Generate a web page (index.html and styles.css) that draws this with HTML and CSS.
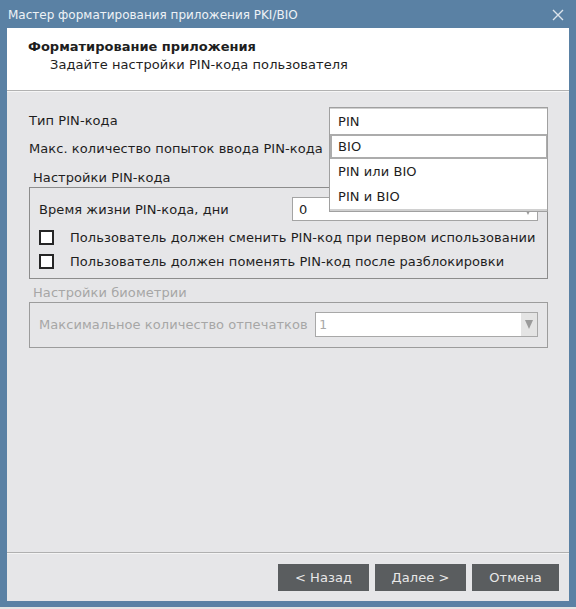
FILE: index.html
```html
<!DOCTYPE html>
<html lang="ru">
<head>
    <meta charset="UTF-8">
    <meta name="viewport" content="width=device-width, initial-scale=1.0">
    <title>Мастер форматирования приложения PKI/BIO</title>
    <link rel="stylesheet" href="styles.css">
</head>
<body>
    <div class="window">
        <div class="titlebar">
            <span class="title">Мастер форматирования приложения PKI/BIO</span>
            <svg class="close" width="12" height="12" viewBox="0 0 12 12">
                <path d="M1 1 L11 11 M11 1 L1 11" stroke="#dce4ec" stroke-width="1.4" fill="none"/>
            </svg>
        </div>

        <div class="client">
            <div class="banner">
                <div class="banner-title">Форматирование приложения</div>
                <div class="banner-sub">Задайте настройки PIN-кода пользователя</div>
            </div>

            <div class="page">
                <div class="row">
                    <span class="label">Тип PIN-кода</span>
                    <div class="combo combo-top"></div>
                </div>
                <div class="row">
                    <span class="label">Макс. количество попыток ввода PIN-кода</span>
                    <div class="combo combo-top"></div>
                </div>

                <div class="group-title">Настройки PIN-кода</div>
                <div class="group group-pin">
                    <div class="row-in">
                        <span class="label">Время жизни PIN-кода, дни</span>
                        <div class="combo combo-life">
                            <span>0</span>
                            <span class="arrow"></span>
                        </div>
                    </div>
                    <div class="check-row">
                        <span class="checkbox"></span>
                        <span class="label">Пользователь должен сменить PIN-код при первом использовании</span>
                    </div>
                    <div class="check-row">
                        <span class="checkbox"></span>
                        <span class="label">Пользователь должен поменять PIN-код после разблокировки</span>
                    </div>
                </div>

                <div class="group-title disabled">Настройки биометрии</div>
                <div class="group group-bio">
                    <div class="row-in">
                        <span class="label disabled">Максимальное количество отпечатков</span>
                        <div class="combo combo-bio">
                            <span class="mono">1</span>
                            <span class="arrow-box"><span class="arrow"></span></span>
                        </div>
                    </div>
                </div>

                <!-- open list of the "Тип PIN-кода" combo -->
                <div class="popup">
                    <div class="item">PIN</div>
                    <div class="item current">BIO</div>
                    <div class="item">PIN или BIO</div>
                    <div class="item">PIN и BIO</div>
                </div>
            </div>

            <div class="footer">
                <button class="btn btn-back">&lt; Назад</button>
                <button class="btn btn-next">Далее &gt;</button>
                <button class="btn btn-cancel">Отмена</button>
            </div>
        </div>
    </div>
</body>
</html>
```

FILE: styles.css
```css
body {
    margin: 0;
    background-color: #e4e4e4;
    font-family: "DejaVu Sans", Verdana, sans-serif;
    font-size: 13px;
    letter-spacing: 0.07px;
    color: #1e1e1e;
}

.window {
    width: 576px;
    height: 607px;
    box-sizing: border-box;
    padding: 0 7px 6px 7px;
    background-color: #5a81a4;
    display: flex;
    flex-direction: column;
}

.titlebar {
    height: 28px;
    display: flex;
    align-items: center;
    justify-content: space-between;
    padding: 0 0 0 1px;
    color: #eef2f6;
    font-size: 12px;
    letter-spacing: 0;
}

.title {
    padding-top: 1px;
}

.close {
    margin-right: 5px;
    margin-top: 2px;
}

.client {
    flex: 1;
    display: flex;
    flex-direction: column;
    background-color: #e6e6e8;
}

.banner {
    height: 63px;
    box-sizing: border-box;
    background: white;
    border-bottom: 1px solid #b2b2b2;
    box-shadow: 0 1px 0 #f6f6f6;
    padding: 10px 0 0 21px;
}

.banner-title {
    font-weight: bold;
    line-height: 17px;
    letter-spacing: 0;
}

.banner-sub {
    padding-left: 22px;
    line-height: 17px;
    margin-top: 1px;
}

.page {
    position: relative;
    flex: 1;
    padding: 15px 21px 0 22px;
}

.row {
    height: 28px;
    display: flex;
    align-items: center;
    justify-content: space-between;
}

.combo {
    box-sizing: border-box;
    height: 24px;
    border: 1px solid #a4a4a4;
    background: white;
    display: flex;
    align-items: center;
    justify-content: space-between;
    padding-left: 6px;
}

.combo-top {
    width: 219px;
}

.group-title {
    margin-top: 8px;
    padding-left: 4px;
    line-height: 16px;
}

.group {
    margin-top: 1px;
    border: 1px solid #8c8c8c;
    padding: 9px 9px 5px 9px;
}

.group-bio {
    margin-top: 1px;
    padding: 9px 9px 10px 9px;
    border-color: #9c9c9c;
}

.group-pin + .group-title {
    margin-top: 6px;
}

.row-in {
    display: flex;
    align-items: center;
    justify-content: space-between;
}

.combo-life {
    width: 246px;
}

.combo-bio {
    width: 223px;
    height: 25px;
    padding-left: 3px;
    border-color: #a8a8a8;
    color: #a8a8a8;
}

.mono {
    font-family: "DejaVu Sans Mono", monospace;
}

.arrow {
    width: 0;
    height: 0;
    border-left: 4px solid transparent;
    border-right: 4px solid transparent;
    border-top: 8px solid #9a9a9a;
    margin-right: 5px;
    margin-top: 4px;
}

.arrow-box {
    width: 16px;
    height: 23px;
    background-color: #e4e4e4;
    display: flex;
    align-items: center;
    justify-content: center;
}

.arrow-box .arrow {
    margin: 0;
    border-top-width: 9px;
}

.check-row {
    height: 24px;
    display: flex;
    align-items: center;
    gap: 16px;
}

.row-in + .check-row {
    margin-top: 4px;
}

.checkbox {
    width: 15px;
    height: 15px;
    box-sizing: border-box;
    border: 2px solid #262626;
    background: white;
}

.disabled {
    color: #a6a6a6;
}

.popup {
    position: absolute;
    left: 322px;
    top: 16px;
    width: 219px;
    box-sizing: border-box;
    background: white;
    border: 1px solid #a0a0a0;
    box-shadow: inset 0 1px 0 #d0d0d0, inset 0 -2px 0 #d0d0d0;
    padding: 1px 0 2px 0;
}

.item {
    height: 25px;
    box-sizing: border-box;
    display: flex;
    align-items: center;
    padding-left: 8px;
}

.item.current {
    border: 2px solid #acacac;
    border-right-width: 1px;
    padding-left: 6px;
}

.footer {
    height: 49px;
    box-sizing: border-box;
    border-top: 1px solid #b0b0b0;
    box-shadow: inset 0 1px 0 #f4f4f4;
    display: flex;
    justify-content: flex-end;
    align-items: flex-start;
    gap: 6px;
    padding: 11px 10px 0 0;
}

.btn {
    height: 27px;
    border: none;
    background-color: #5a5d5f;
    color: #e8e8e8;
    font-family: "DejaVu Sans", Verdana, sans-serif;
    font-size: 13px;
    letter-spacing: 0.07px;
    padding: 0;
}

.btn-back,
.btn-next {
    width: 91px;
}

.btn-cancel {
    width: 87px;
}
```
